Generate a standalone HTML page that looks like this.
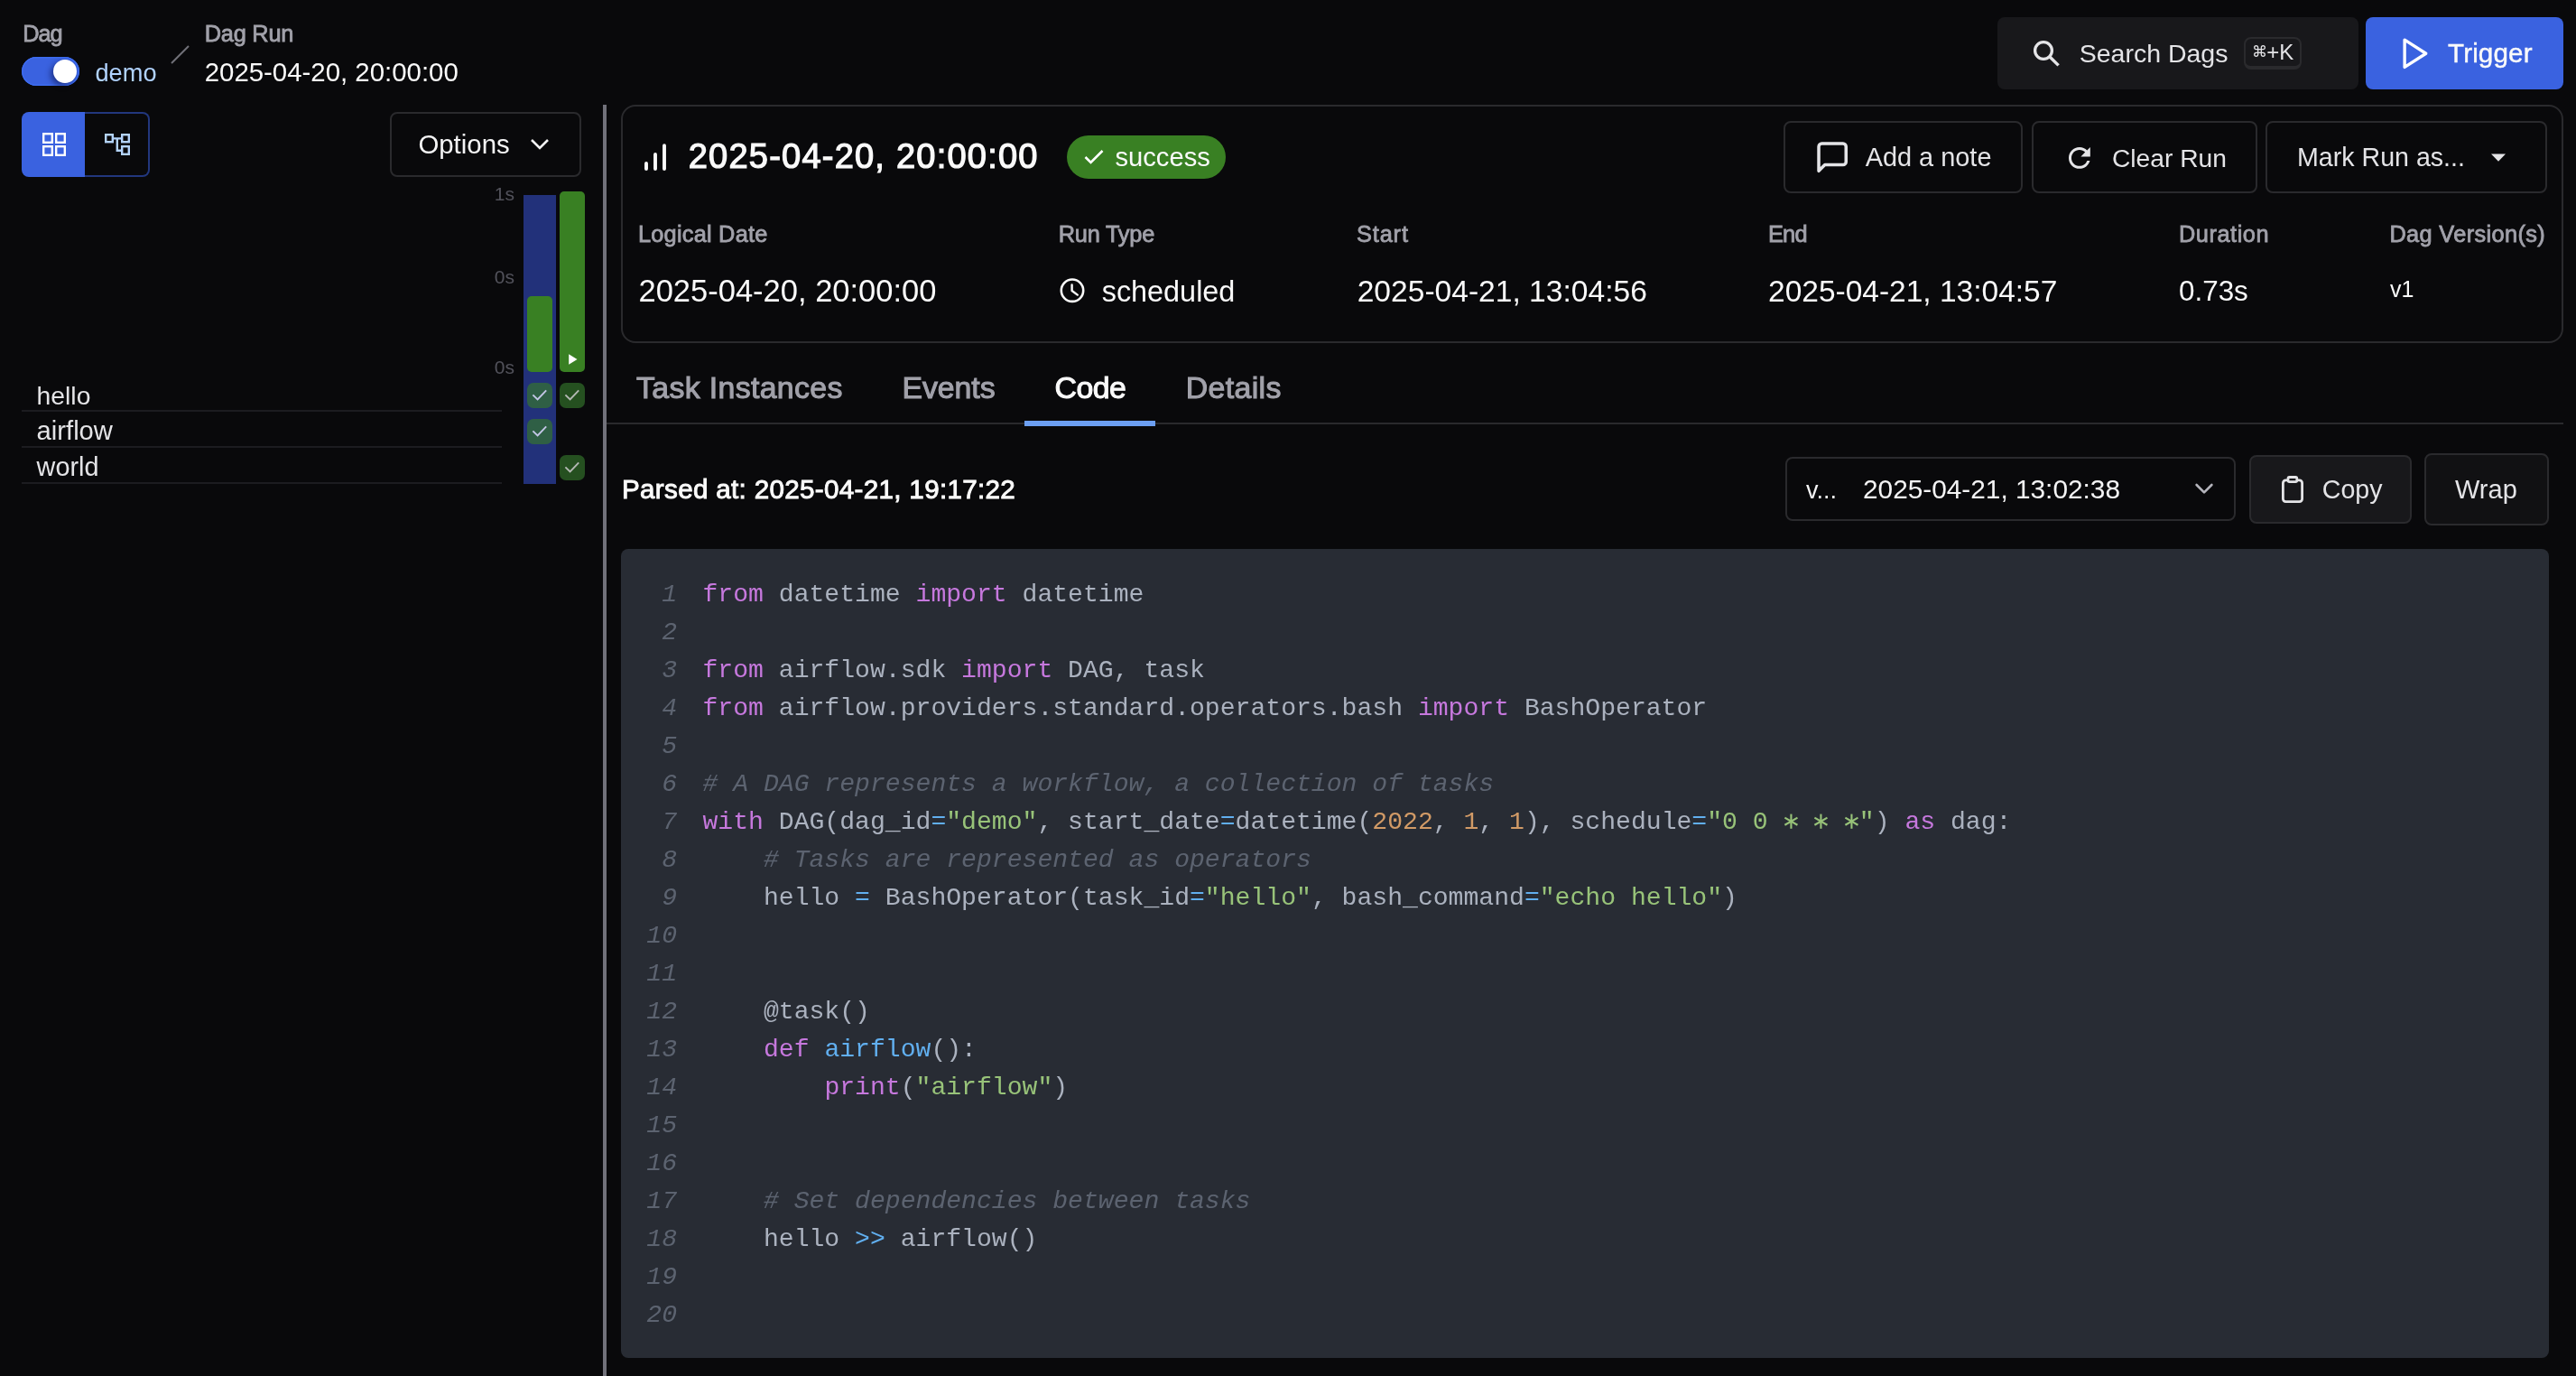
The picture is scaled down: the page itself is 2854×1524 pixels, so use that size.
<!DOCTYPE html>
<html><head><meta charset="utf-8"><style>
html,body{margin:0;padding:0;background:#09090b;width:2854px;height:1524px;overflow:hidden;position:relative;font-family:"Liberation Sans",sans-serif;}
.t{position:absolute;white-space:nowrap;line-height:1;}
@media (max-width:2000px){html,body{width:1427px;height:762px;} #root{transform:scale(0.5);transform-origin:0 0;}}
.ln{position:absolute;right:2104px;font-family:"Liberation Mono",monospace;font-size:28.1px;line-height:42px;color:#5c6370;font-style:italic;white-space:pre;}
.cl{position:absolute;left:778.5px;font-family:"Liberation Mono",monospace;font-size:28.1px;line-height:42px;color:#abb2bf;white-space:pre;}
</style></head><body>
<div id="root" style="position:absolute;left:0;top:0;width:2854px;height:1524px;will-change:transform">
<div class="t" style="left:25.2px;top:24.52px;font-size:25.37px;color:#a1a1aa;letter-spacing:-1.100px;-webkit-text-stroke:0.81px #a1a1aa;">Dag</div>
<div class="t" style="left:226.7px;top:24.52px;font-size:25.37px;color:#a1a1aa;letter-spacing:-0.233px;-webkit-text-stroke:0.81px #a1a1aa;">Dag Run</div>
<div style="position:absolute;left:24px;top:63px;width:64px;height:32px;background:#3a62e0;border-radius:16px;box-shadow:inset 0 0 0 1.5px #3d6cf0;"></div>
<div style="position:absolute;left:59px;top:66px;width:26px;height:26px;background:#fff;border-radius:50%;box-shadow:-3px 3px 6px rgba(0,0,40,.45);"></div>
<div class="t" style="left:105.5px;top:66.77px;font-size:27.2px;color:#b0d2fd;">demo</div>
<svg style="position:absolute;left:188px;top:48px" width="24" height="24" viewBox="0 0 24 24"><line x1="2" y1="22" x2="21" y2="3" stroke="#71717a" stroke-width="2"/></svg>
<div class="t" style="left:226.7px;top:65.31px;font-size:29.4px;color:#fafafa;">2025-04-20, 20:00:00</div>
<div style="position:absolute;left:2213px;top:19px;width:400px;height:80px;background:#18181b;border-radius:8px;"></div>
<svg style="position:absolute;left:2240px;top:35px" width="50" height="50" viewBox="0 0 50 50"><circle cx="24" cy="21" r="9.4" fill="none" stroke="#e4e4e7" stroke-width="3.3"/><line x1="30.8" y1="27.8" x2="40.6" y2="37.4" stroke="#e4e4e7" stroke-width="3.4"/></svg>
<div class="t" style="left:2303.7px;top:45.17px;font-size:28.5px;color:#e4e4e7;">Search Dags</div>
<div style="position:absolute;left:2486px;top:41px;width:64px;height:36px;background:#18181b;border:2px solid #2a2a2d;border-bottom-width:4px;border-radius:8px;box-sizing:border-box;"></div>
<div class="t" style="left:2494.6px;top:49.11px;font-size:17px;color:#e4e4e7;">⌘</div>
<div class="t" style="left:2511.2px;top:45.88px;font-size:24px;color:#e4e4e7;">+K</div>
<div style="position:absolute;left:2621px;top:19px;width:219px;height:80px;background:#3a62e0;border-radius:8px;"></div>
<svg style="position:absolute;left:2654px;top:39.4px" width="40.5" height="40.5" viewBox="0 0 24 24"><polygon points="6 3 20 12 6 21" fill="none" stroke="#fff" stroke-width="2" stroke-linejoin="round" stroke-linecap="round"/></svg>
<div class="t" style="left:2712px;top:44.24px;font-size:29.6px;color:#fafafa;letter-spacing:0.150px;-webkit-text-stroke:0.4px #fafafa;">Trigger</div>
<div style="position:absolute;left:24px;top:124px;width:70px;height:72px;background:#3a62e0;border-radius:8px 0 0 8px;"></div>
<div style="position:absolute;left:94px;top:124px;width:72px;height:72px;border:2px solid #22377e;border-left:none;border-radius:0 8px 8px 0;box-sizing:border-box;"></div>
<svg style="position:absolute;left:47px;top:147px" width="26" height="26" viewBox="0 0 26 26"><g fill="none" stroke="#fff" stroke-width="2.4"><rect x="1.2" y="1.2" width="9.6" height="9.6"/><rect x="15.2" y="1.2" width="9.6" height="9.6"/><rect x="1.2" y="15.2" width="9.6" height="9.6"/><rect x="15.2" y="15.2" width="9.6" height="9.6"/></g></svg>
<svg style="position:absolute;left:116px;top:148px" width="28" height="25" viewBox="0 0 28 25"><g fill="none" stroke="#b3d3fa" stroke-width="2.4"><rect x="1.2" y="1.2" width="7.6" height="8"/><rect x="19.2" y="1.2" width="7.6" height="8"/><rect x="19.2" y="14.2" width="7.6" height="8.6"/><path d="M8.8 5.4 H19.2 M13.8 5.4 V18.8 H19.2"/></g></svg>
<div style="position:absolute;left:432px;top:124px;width:212px;height:72px;border:2px solid #2a2a2d;border-radius:8px;box-sizing:border-box;"></div>
<div class="t" style="left:463.4px;top:145.11px;font-size:29.4px;color:#f4f4f5;">Options</div>
<svg style="position:absolute;left:586px;top:152px" width="24" height="16" viewBox="0 0 24 16"><path d="M3 3 L12 12 L21 3" fill="none" stroke="#f4f4f5" stroke-width="2.6"/></svg>
<div style="position:absolute;left:668px;top:116px;width:4px;height:1408px;background:#71717a;"></div>
<div class="t" style="right:2284px;top:203.72px;font-size:21px;color:#52525b;">1s</div>
<div class="t" style="right:2284px;top:295.92px;font-size:21px;color:#52525b;">0s</div>
<div class="t" style="right:2284px;top:395.92px;font-size:21px;color:#52525b;">0s</div>
<div style="position:absolute;left:580px;top:216px;width:36px;height:320px;background:#22317a;"></div>
<div style="position:absolute;left:584px;top:328px;width:28px;height:84px;background:#398023;border-radius:5px;"></div>
<div style="position:absolute;left:620px;top:212px;width:28px;height:200px;background:#398023;border-radius:5px;"></div>
<svg style="position:absolute;left:630px;top:392px" width="10" height="12" viewBox="0 0 10 12"><path d="M0.2 0.2 L9.5 6 L0.2 11.8 Z" fill="#fff"/></svg>
<div style="position:absolute;left:584px;top:424px;width:28px;height:28px;background:#2f5f45;border-radius:7px;"></div>
<svg style="position:absolute;left:584px;top:424px" width="28" height="28" viewBox="0 0 28 28"><path d="M6.4 13.3 L11.6 18.5 L21.2 8.3" fill="none" stroke="#c3c6e6" stroke-width="1.9"/></svg>
<div style="position:absolute;left:620px;top:424px;width:28px;height:28px;background:#255020;border-radius:7px;"></div>
<svg style="position:absolute;left:620px;top:424px" width="28" height="28" viewBox="0 0 28 28"><path d="M6.4 13.3 L11.6 18.5 L21.2 8.3" fill="none" stroke="#b4b8b4" stroke-width="1.9"/></svg>
<div style="position:absolute;left:584px;top:464px;width:28px;height:28px;background:#2f5f45;border-radius:7px;"></div>
<svg style="position:absolute;left:584px;top:464px" width="28" height="28" viewBox="0 0 28 28"><path d="M6.4 13.3 L11.6 18.5 L21.2 8.3" fill="none" stroke="#c3c6e6" stroke-width="1.9"/></svg>
<div style="position:absolute;left:620px;top:504px;width:28px;height:28px;background:#255020;border-radius:7px;"></div>
<svg style="position:absolute;left:620px;top:504px" width="28" height="28" viewBox="0 0 28 28"><path d="M6.4 13.3 L11.6 18.5 L21.2 8.3" fill="none" stroke="#b4b8b4" stroke-width="1.9"/></svg>
<div class="t" style="left:40.6px;top:423.84px;font-size:28.3px;color:#e4e4e7;">hello</div>
<div style="position:absolute;left:24px;top:454px;width:532px;height:2px;background:#1c1c20;"></div>
<div class="t" style="left:40.6px;top:462.88px;font-size:29.2px;color:#e4e4e7;">airflow</div>
<div style="position:absolute;left:24px;top:494px;width:532px;height:2px;background:#1c1c20;"></div>
<div class="t" style="left:40.6px;top:503.42px;font-size:28.8px;color:#e4e4e7;">world</div>
<div style="position:absolute;left:24px;top:534px;width:532px;height:2px;background:#1c1c20;"></div>
<div style="position:absolute;left:688px;top:116px;width:2152px;height:264px;border:2px solid #2a2a2d;border-radius:16px;box-sizing:border-box;"></div>
<svg style="position:absolute;left:712px;top:158px" width="28" height="32" viewBox="0 0 28 32"><g stroke="#fafafa" stroke-width="3.9" stroke-linecap="round"><line x1="4" y1="23" x2="4" y2="29"/><line x1="14" y1="13" x2="14" y2="29"/><line x1="24" y1="3.2" x2="24" y2="29"/></g></svg>
<div class="t" style="left:762.7px;top:154.28px;font-size:38.05px;color:#fafafa;letter-spacing:1.205px;-webkit-text-stroke:1.22px #fafafa;">2025-04-20, 20:00:00</div>
<div style="position:absolute;left:1182px;top:150px;width:176px;height:48px;background:#398023;border-radius:24px;"></div>
<svg style="position:absolute;left:1200px;top:164px" width="24" height="20" viewBox="0 0 24 20"><path d="M2.5 10 L8.5 16 L21.5 3" fill="none" stroke="#fff" stroke-width="2.6"/></svg>
<div class="t" style="left:1235.4px;top:159.68px;font-size:29.2px;color:#fafafa;">success</div>
<div style="position:absolute;left:1976px;top:134px;width:265px;height:80px;border:2px solid #2a2a2d;border-radius:8px;box-sizing:border-box;"></div>
<div style="position:absolute;left:2251px;top:134px;width:250px;height:80px;border:2px solid #2a2a2d;border-radius:8px;box-sizing:border-box;"></div>
<div style="position:absolute;left:2510px;top:134px;width:312px;height:80px;border:2px solid #2a2a2d;border-radius:8px;box-sizing:border-box;"></div>
<svg style="position:absolute;left:2009.8px;top:153.6px" width="40.3" height="40.3" viewBox="0 0 24 24"><path d="M21 15a2 2 0 0 1-2 2H7l-4 4V5a2 2 0 0 1 2-2h14a2 2 0 0 1 2 2z" fill="none" stroke="#e4e4e7" stroke-width="2.1" stroke-linejoin="round" stroke-linecap="round"/></svg>
<div class="t" style="left:2066.7px;top:159.93px;font-size:28.9px;color:#e4e4e7;">Add a note</div>
<svg style="position:absolute;left:2286px;top:157px" width="35.8" height="35.8" viewBox="0 0 24 24"><path d="M17.65 6.35C16.2 4.9 14.21 4 12 4c-4.42 0-7.99 3.58-7.99 8s3.57 8 7.99 8c3.73 0 6.84-2.55 7.73-6h-2.08c-.82 2.33-3.04 4-5.650 4-3.31 0-6-2.69-6-6s2.69-6 6-6c1.66 0 3.14.69 4.22 1.78L13 11h7V4l-2.35 2.35z" fill="#e4e4e7"/></svg>
<div class="t" style="left:2340px;top:160.52px;font-size:28.2px;color:#e4e4e7;">Clear Run</div>
<div class="t" style="left:2545px;top:160.18px;font-size:28.6px;color:#e4e4e7;">Mark Run as...</div>
<svg style="position:absolute;left:2757px;top:168px" width="22" height="14" viewBox="0 0 22 14"><path d="M3 2.4 H19 L11 10.8 Z" fill="#e4e4e7"/></svg>
<div class="t" style="left:706.9px;top:246.52px;font-size:25.37px;color:#a1a1aa;letter-spacing:0.227px;-webkit-text-stroke:0.81px #a1a1aa;">Logical Date</div>
<div class="t" style="left:1172.7px;top:246.52px;font-size:25.37px;color:#a1a1aa;letter-spacing:-0.214px;-webkit-text-stroke:0.81px #a1a1aa;">Run Type</div>
<div class="t" style="left:1503px;top:246.52px;font-size:25.37px;color:#a1a1aa;letter-spacing:0.850px;-webkit-text-stroke:0.81px #a1a1aa;">Start</div>
<div class="t" style="left:1959px;top:246.52px;font-size:25.37px;color:#a1a1aa;letter-spacing:-0.800px;-webkit-text-stroke:0.81px #a1a1aa;">End</div>
<div class="t" style="left:2414px;top:246.52px;font-size:25.37px;color:#a1a1aa;letter-spacing:0.529px;-webkit-text-stroke:0.81px #a1a1aa;">Duration</div>
<div class="t" style="left:2647.4px;top:246.52px;font-size:25.37px;color:#a1a1aa;letter-spacing:0.354px;-webkit-text-stroke:0.81px #a1a1aa;">Dag Version(s)</div>
<div class="t" style="left:707.5px;top:304.79px;font-size:34.5px;color:#fafafa;">2025-04-20, 20:00:00</div>
<svg style="position:absolute;left:1173px;top:308px" width="30" height="30" viewBox="0 0 30 30"><circle cx="15" cy="13.7" r="12.2" fill="none" stroke="#fafafa" stroke-width="2.6"/><path d="M14.6 7.4 V14 L20.8 18.6" fill="none" stroke="#fafafa" stroke-width="2.4" stroke-linecap="round" stroke-linejoin="round"/></svg>
<div class="t" style="left:1220.7px;top:306.57px;font-size:32.4px;color:#fafafa;">scheduled</div>
<div class="t" style="left:1503.7px;top:305.55px;font-size:33.6px;color:#fafafa;">2025-04-21, 13:04:56</div>
<div class="t" style="left:1959px;top:305.64px;font-size:33.5px;color:#fafafa;">2025-04-21, 13:04:57</div>
<div class="t" style="left:2414px;top:307.41px;font-size:31.4px;color:#fafafa;">0.73s</div>
<div class="t" style="left:2648px;top:308.43px;font-size:25px;color:#fafafa;">v1</div>
<div style="position:absolute;left:672px;top:468px;width:2168px;height:2px;background:#2a2a2d;"></div>
<div class="t" style="left:705px;top:412.56px;font-size:33.82px;color:#a1a1aa;letter-spacing:0.362px;-webkit-text-stroke:1.08px #a1a1aa;">Task Instances</div>
<div class="t" style="left:999.4px;top:412.56px;font-size:33.82px;color:#a1a1aa;letter-spacing:-0.040px;-webkit-text-stroke:1.08px #a1a1aa;">Events</div>
<div class="t" style="left:1168.4px;top:412.56px;font-size:33.82px;color:#fafafa;letter-spacing:-0.433px;-webkit-text-stroke:1.08px #fafafa;">Code</div>
<div class="t" style="left:1313.7px;top:412.56px;font-size:33.82px;color:#a1a1aa;letter-spacing:0.383px;-webkit-text-stroke:1.08px #a1a1aa;">Details</div>
<div style="position:absolute;left:1135px;top:466px;width:145px;height:6px;background:#6c9ff2;"></div>
<div class="t" style="left:689px;top:526.94px;font-size:29.6px;color:#fafafa;letter-spacing:0.323px;-webkit-text-stroke:0.95px #fafafa;">Parsed at: 2025-04-21, 19:17:22</div>
<div style="position:absolute;left:1978px;top:506px;width:499px;height:71px;border:2px solid #2a2a2d;border-radius:8px;box-sizing:border-box;"></div>
<div class="t" style="left:2001px;top:529.64px;font-size:27px;color:#f4f4f5;">v...</div>
<div class="t" style="left:2064px;top:527.27px;font-size:29.8px;color:#f4f4f5;">2025-04-21, 13:02:38</div>
<svg style="position:absolute;left:2430px;top:532px" width="24" height="18" viewBox="0 0 24 18"><path d="M3.6 5 L12 13.4 L20.4 5" fill="none" stroke="#b4b4bc" stroke-width="2.6" stroke-linecap="round" stroke-linejoin="round"/></svg>
<div style="position:absolute;left:2492px;top:504px;width:180px;height:76px;background:#18181b;border:2px solid #2a2a2d;border-radius:8px;box-sizing:border-box;"></div>
<svg style="position:absolute;left:2526px;top:525px" width="30" height="34" viewBox="0 0 30 34"><rect x="3.4" y="6.9" width="21.2" height="23.7" rx="3" fill="none" stroke="#e4e4e7" stroke-width="2.8"/><rect x="9" y="3.5" width="9.8" height="5.1" rx="1.5" fill="#18181b" stroke="#e4e4e7" stroke-width="2.8"/></svg>
<div class="t" style="left:2572.8px;top:528.28px;font-size:28.6px;color:#e4e4e7;">Copy</div>
<div style="position:absolute;left:2686px;top:502px;width:138px;height:80px;background:#111113;border:2px solid #2a2a2d;border-radius:8px;box-sizing:border-box;"></div>
<div class="t" style="left:2720px;top:527.95px;font-size:29px;color:#e4e4e7;">Wrap</div>
<div style="position:absolute;left:688px;top:608px;width:2136px;height:896px;background:#282c34;border-radius:8px;"></div>
<div class="ln" style="top:637.52px">1</div>
<div class="cl" style="top:637.52px"><span style="color:#c678dd">from</span> datetime <span style="color:#c678dd">import</span> datetime</div>
<div class="ln" style="top:679.52px">2</div>
<div class="cl" style="top:679.52px"></div>
<div class="ln" style="top:721.52px">3</div>
<div class="cl" style="top:721.52px"><span style="color:#c678dd">from</span> airflow.sdk <span style="color:#c678dd">import</span> DAG, task</div>
<div class="ln" style="top:763.52px">4</div>
<div class="cl" style="top:763.52px"><span style="color:#c678dd">from</span> airflow.providers.standard.operators.bash <span style="color:#c678dd">import</span> BashOperator</div>
<div class="ln" style="top:805.52px">5</div>
<div class="cl" style="top:805.52px"></div>
<div class="ln" style="top:847.52px">6</div>
<div class="cl" style="top:847.52px"><span style="color:#5c6370;font-style:italic"># A DAG represents a workflow, a collection of tasks</span></div>
<div class="ln" style="top:889.52px">7</div>
<div class="cl" style="top:889.52px"><span style="color:#c678dd">with</span> DAG(dag_id<span style="color:#61afef">=</span><span style="color:#98c379">&quot;demo&quot;</span>, start_date<span style="color:#61afef">=</span>datetime(<span style="color:#d19a66">2022</span>, <span style="color:#d19a66">1</span>, <span style="color:#d19a66">1</span>), schedule<span style="color:#61afef">=</span><span style="color:#98c379">&quot;0 0 <span style="position:relative;color:transparent">*<svg style="position:absolute;left:0;top:0" width="17" height="30" viewBox="0 0 17 30"><g stroke="#98c379" stroke-width="2.1"><line x1="8.43" y1="6.6" x2="8.43" y2="22.8"/><line x1="1.4" y1="10.65" x2="15.46" y2="18.75"/><line x1="1.4" y1="18.75" x2="15.46" y2="10.65"/></g></svg></span> <span style="position:relative;color:transparent">*<svg style="position:absolute;left:0;top:0" width="17" height="30" viewBox="0 0 17 30"><g stroke="#98c379" stroke-width="2.1"><line x1="8.43" y1="6.6" x2="8.43" y2="22.8"/><line x1="1.4" y1="10.65" x2="15.46" y2="18.75"/><line x1="1.4" y1="18.75" x2="15.46" y2="10.65"/></g></svg></span> <span style="position:relative;color:transparent">*<svg style="position:absolute;left:0;top:0" width="17" height="30" viewBox="0 0 17 30"><g stroke="#98c379" stroke-width="2.1"><line x1="8.43" y1="6.6" x2="8.43" y2="22.8"/><line x1="1.4" y1="10.65" x2="15.46" y2="18.75"/><line x1="1.4" y1="18.75" x2="15.46" y2="10.65"/></g></svg></span>&quot;</span>) <span style="color:#c678dd">as</span> dag:</div>
<div class="ln" style="top:931.52px">8</div>
<div class="cl" style="top:931.52px">    <span style="color:#5c6370;font-style:italic"># Tasks are represented as operators</span></div>
<div class="ln" style="top:973.52px">9</div>
<div class="cl" style="top:973.52px">    hello <span style="color:#61afef">=</span> BashOperator(task_id<span style="color:#61afef">=</span><span style="color:#98c379">&quot;hello&quot;</span>, bash_command<span style="color:#61afef">=</span><span style="color:#98c379">&quot;echo hello&quot;</span>)</div>
<div class="ln" style="top:1015.52px">10</div>
<div class="cl" style="top:1015.52px"></div>
<div class="ln" style="top:1057.52px">11</div>
<div class="cl" style="top:1057.52px"></div>
<div class="ln" style="top:1099.52px">12</div>
<div class="cl" style="top:1099.52px">    @task()</div>
<div class="ln" style="top:1141.52px">13</div>
<div class="cl" style="top:1141.52px">    <span style="color:#c678dd">def</span> <span style="color:#61afef">airflow</span>():</div>
<div class="ln" style="top:1183.52px">14</div>
<div class="cl" style="top:1183.52px">        <span style="color:#c678dd">print</span>(<span style="color:#98c379">&quot;airflow&quot;</span>)</div>
<div class="ln" style="top:1225.52px">15</div>
<div class="cl" style="top:1225.52px"></div>
<div class="ln" style="top:1267.52px">16</div>
<div class="cl" style="top:1267.52px"></div>
<div class="ln" style="top:1309.52px">17</div>
<div class="cl" style="top:1309.52px">    <span style="color:#5c6370;font-style:italic"># Set dependencies between tasks</span></div>
<div class="ln" style="top:1351.52px">18</div>
<div class="cl" style="top:1351.52px">    hello <span style="color:#61afef">&gt;&gt;</span> airflow()</div>
<div class="ln" style="top:1393.52px">19</div>
<div class="cl" style="top:1393.52px"></div>
<div class="ln" style="top:1435.52px">20</div>
<div class="cl" style="top:1435.52px"></div>
</div>
</body></html>
